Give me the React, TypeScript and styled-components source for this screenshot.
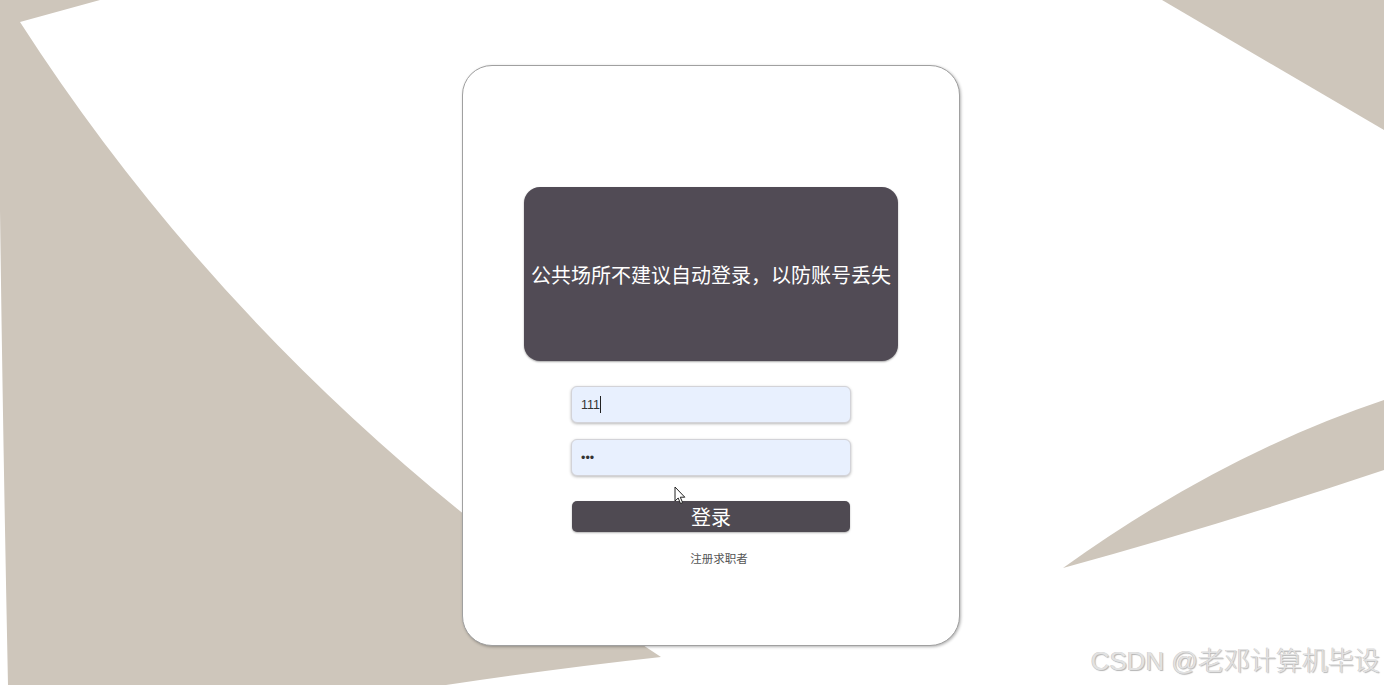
import React from "react";
import styled, { createGlobalStyle } from "styled-components";

const GlobalStyle = createGlobalStyle`
  html, body {
    margin: 0;
    padding: 0;
    background: #ffffff;
  }
  body {
    font-family: "Noto Sans CJK SC", "Liberation Sans", sans-serif;
  }
  * { box-sizing: border-box; }
`;

const Page = styled.div`
  position: relative;
  width: 100vw;
  height: 100vh;
  min-height: 685px;
  overflow: hidden;
  background: #ffffff;
`;

const Backdrop = styled.svg`
  position: absolute;
  inset: 0;
  width: 1384px;
  height: 685px;
  z-index: 0;
`;

const Content = styled.main`
  position: relative;
  z-index: 1;
  display: flex;
  align-items: flex-start;
  padding: 65px 0 0 462px;
`;

const Card = styled.section`
  width: 498px;
  height: 581px;
  border: 1px solid #a0a0a0;
  border-radius: 30px;
  background: #ffffff;
  box-shadow: 1px 1px 3px rgba(0, 0, 0, 0.3);
  display: flex;
  flex-direction: column;
  align-items: center;
  padding-top: 121px;
`;

const Notice = styled.div`
  width: 374px;
  height: 174px;
  border-radius: 16px;
  background: #514b55;
  box-shadow: 0 1px 2px rgba(0, 0, 0, 0.35);
  display: flex;
  align-items: center;
  justify-content: center;
  color: #ffffff;
  font-size: 20px;
  font-family: "Noto Sans CJK SC", sans-serif;
`;

const Form = styled.form`
  margin-top: 25px;
  width: 280px;
  display: flex;
  flex-direction: column;
  align-items: center;
  gap: 16px;
`;

const Field = styled.div`
  position: relative;
  width: 280px;
`;

const Input = styled.input`
  width: 100%;
  height: 37px;
  border: 1px solid #d3d3d8;
  border-radius: 6px;
  background: #e8f0fe;
  padding: 0 9px;
  font-family: "Liberation Sans", "Noto Sans CJK SC", sans-serif;
  font-size: 12.5px;
  color: #333333;
  box-shadow: 0 1px 3px rgba(0, 0, 0, 0.28);
  outline: none;
`;

const Caret = styled.span`
  position: absolute;
  left: 29px;
  top: 10px;
  width: 1px;
  height: 17px;
  background: #222222;
`;

const SubmitButton = styled.button`
  margin-top: 9px;
  width: 278px;
  height: 31px;
  border: none;
  border-radius: 5px;
  background: #4f4a52;
  color: #ffffff;
  font-family: "Noto Sans CJK SC", sans-serif;
  font-size: 20px;
  line-height: 31px;
  padding: 0;
  box-shadow: 0 1px 2px rgba(0, 0, 0, 0.3);
  cursor: pointer;
`;

const RegisterLink = styled.a`
  margin-top: 18px;
  font-size: 11.5px;
  color: #555555;
  text-decoration: none;
  padding-left: 16px;
  font-family: "Noto Sans CJK SC", sans-serif;
`;

const Pointer = styled.svg`
  position: absolute;
  left: 674px;
  top: 486px;
  z-index: 2;
`;

const Watermark = styled.div`
  position: absolute;
  right: 4px;
  bottom: 8px;
  z-index: 2;
  font-family: "Liberation Sans", "Noto Sans CJK SC", sans-serif;
  font-size: 26px;
  font-weight: 300;
  color: #e2e2e2;
  text-shadow: 1px 1px 1px #b4b4b4, -0.5px -0.5px 0 #c8c8c8;
`;

const BEIGE = "#cec6bb";

export default function App() {
  return (
    <>
      <GlobalStyle />
      <Page>
        <Backdrop viewBox="0 0 1384 685" preserveAspectRatio="none">
          <rect x="0" y="0" width="1384" height="685" fill="#ffffff" />
          <path
            d="M0,0 L100,0 L20,22 Q262,398 661,657 Q560,668 446,685 L8,685 Q3,440 0,210 Z"
            fill={BEIGE}
          />
          <path d="M1162,0 L1384,0 L1384,130 Z" fill={BEIGE} />
          <path
            d="M1063,568 Q1220,455 1384,400 L1384,470 Q1220,525 1063,568 Z"
            fill={BEIGE}
          />
        </Backdrop>
        <Content>
          <Card>
            <Notice>公共场所不建议自动登录，以防账号丢失</Notice>
            <Form onSubmit={(e) => e.preventDefault()}>
              <Field>
                <Input type="text" defaultValue="111" />
                <Caret />
              </Field>
              <Field>
                <Input type="password" defaultValue="111" />
              </Field>
              <SubmitButton type="submit">登录</SubmitButton>
            </Form>
            <RegisterLink href="#">注册求职者</RegisterLink>
          </Card>
        </Content>
        <Pointer width="12" height="19" viewBox="0 0 12 19">
          <path
            d="M1,1 L1,15 L4.2,12 L6.5,17.5 L8.6,16.6 L6.3,11.2 L10.8,11.2 Z"
            fill="#ffffff"
            stroke="#222222"
            strokeWidth="1"
            strokeLinejoin="round"
          />
        </Pointer>
        <Watermark>CSDN @老邓计算机毕设</Watermark>
      </Page>
    </>
  );
}
